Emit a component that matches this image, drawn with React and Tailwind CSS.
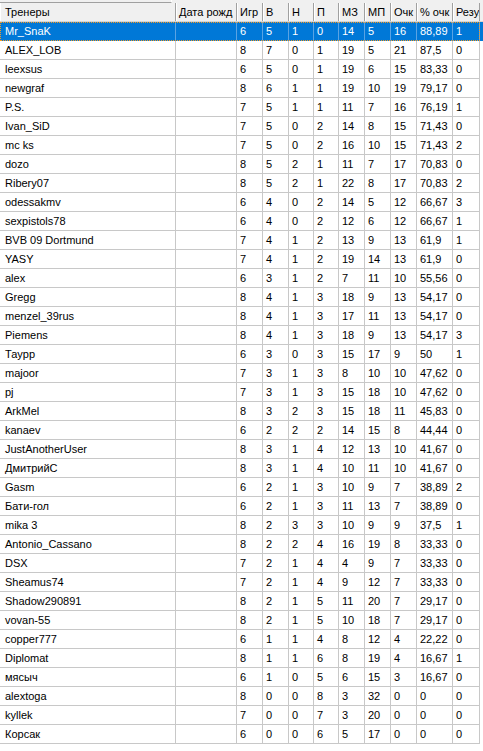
import React from 'react';

const widths = ['w-[176px]', 'w-[61px]', 'w-[26px]', 'w-[26px]', 'w-[25px]', 'w-[25px]', 'w-[26px]', 'w-[26px]', 'w-[26px]', 'w-[36px]', 'w-[27px]'];

const headers = ['Тренеры', 'Дата рожд', 'Игр', 'В', 'Н', 'П', 'МЗ', 'МП', 'Очк', '% очк', 'Результат'];

// name, birth, games, w, d, l, scored, conceded, points, pct, result
const rows = [
  ['Mr_SnaK', '', 6, 5, 1, 0, 14, 5, 16, '88,89', 1],
  ['ALEX_LOB', '', 8, 7, 0, 1, 19, 5, 21, '87,5', 0],
  ['leexsus', '', 6, 5, 0, 1, 19, 6, 15, '83,33', 0],
  ['newgraf', '', 8, 6, 1, 1, 19, 10, 19, '79,17', 0],
  ['P.S.', '', 7, 5, 1, 1, 11, 7, 16, '76,19', 1],
  ['Ivan_SiD', '', 7, 5, 0, 2, 14, 8, 15, '71,43', 0],
  ['mc ks', '', 7, 5, 0, 2, 16, 10, 15, '71,43', 2],
  ['dozo', '', 8, 5, 2, 1, 11, 7, 17, '70,83', 0],
  ['Ribery07', '', 8, 5, 2, 1, 22, 8, 17, '70,83', 2],
  ['odessakmv', '', 6, 4, 0, 2, 14, 5, 12, '66,67', 3],
  ['sexpistols78', '', 6, 4, 0, 2, 12, 6, 12, '66,67', 1],
  ['BVB 09 Dortmund', '', 7, 4, 1, 2, 13, 9, 13, '61,9', 1],
  ['YASY', '', 7, 4, 1, 2, 19, 14, 13, '61,9', 0],
  ['alex', '', 6, 3, 1, 2, 7, 11, 10, '55,56', 0],
  ['Gregg', '', 8, 4, 1, 3, 18, 9, 13, '54,17', 0],
  ['menzel_39rus', '', 8, 4, 1, 3, 17, 11, 13, '54,17', 0],
  ['Piemens', '', 8, 4, 1, 3, 18, 9, 13, '54,17', 3],
  ['Таypp', '', 6, 3, 0, 3, 15, 17, 9, '50', 1],
  ['majoor', '', 7, 3, 1, 3, 8, 10, 10, '47,62', 0],
  ['pj', '', 7, 3, 1, 3, 15, 18, 10, '47,62', 0],
  ['ArkMel', '', 8, 3, 2, 3, 15, 18, 11, '45,83', 0],
  ['kanaev', '', 6, 2, 2, 2, 14, 15, 8, '44,44', 0],
  ['JustAnotherUser', '', 8, 3, 1, 4, 12, 13, 10, '41,67', 0],
  ['ДмитрийС', '', 8, 3, 1, 4, 10, 11, 10, '41,67', 0],
  ['Gasm', '', 6, 2, 1, 3, 10, 9, 7, '38,89', 2],
  ['Бати-гол', '', 6, 2, 1, 3, 11, 13, 7, '38,89', 0],
  ['mika 3', '', 8, 2, 3, 3, 10, 9, 9, '37,5', 1],
  ['Antonio_Cassano', '', 8, 2, 2, 4, 16, 19, 8, '33,33', 0],
  ['DSX', '', 7, 2, 1, 4, 4, 9, 7, '33,33', 0],
  ['Sheamus74', '', 7, 2, 1, 4, 9, 12, 7, '33,33', 0],
  ['Shadow290891', '', 8, 2, 1, 5, 11, 20, 7, '29,17', 0],
  ['vovan-55', '', 8, 2, 1, 5, 10, 18, 7, '29,17', 0],
  ['copper777', '', 6, 1, 1, 4, 8, 12, 4, '22,22', 0],
  ['Diplomat', '', 8, 1, 1, 6, 8, 19, 4, '16,67', 1],
  ['мясыч', '', 6, 1, 0, 5, 6, 15, 3, '16,67', 0],
  ['alextoga', '', 8, 0, 0, 8, 3, 32, 0, '0', 0],
  ['kyllek', '', 7, 0, 0, 7, 3, 20, 0, '0', 0],
  ['Корсак', '', 6, 0, 0, 6, 5, 17, 0, '0', 0],
];

const HeaderCell = ({ label, i }) => (
  <div className={`${widths[i]} shrink-0 h-full border-r border-r-[#a0a0a0] border-l border-l-white overflow-hidden whitespace-nowrap ${i === 0 ? 'pl-[4px]' : 'pl-[2px]'} leading-[18px]`}>
    {label}
  </div>
);

const Row = ({ row, selected }) => (
  <div className={`relative flex h-[19px] ${selected ? 'bg-[#0078d7] text-white' : 'text-black'}`}>
    {row.map((val, i) => (
      <div
        key={i}
        className={`${widths[i]} shrink-0 h-full border-r border-b ${selected ? 'border-r-[#5aa3e3] border-b-[#0078d7]' : 'border-[#c8c8c8]'} overflow-hidden whitespace-nowrap ${i === 0 ? 'pl-[5px]' : 'pl-[3px]'} leading-[18px]`}
      >
        {val}
      </div>
    ))}
    {selected && (
      <div className="absolute left-0 top-0 w-[480px] h-[19px] border border-dotted border-[#f59a23] pointer-events-none" />
    )}
  </div>
);

export default function App() {
  return (
    <div className="w-[483px] h-[751px] bg-white overflow-hidden text-[11px]" style={{ fontFamily: '"Liberation Sans", Arial, sans-serif' }}>
      {/* top edge of control above */}
      <div className="flex h-[3px] bg-[#f0f0f0]">
        <div className="w-[172px] h-full border-b border-b-[#a0a0a0] border-r border-r-white" />
      </div>

      {/* column header */}
      <div className="flex h-[19px] bg-[#f0f0f0] border-b border-b-[#d5d5d5] text-black">
        {headers.map((h, i) => (
          <HeaderCell key={i} label={h} i={i} />
        ))}
        <div className="flex-1" />
      </div>

      <div className="flex flex-col">
        {rows.map((r, idx) => (
          <Row key={idx} row={r} selected={idx === 0} />
        ))}
      </div>
    </div>
  );
}
